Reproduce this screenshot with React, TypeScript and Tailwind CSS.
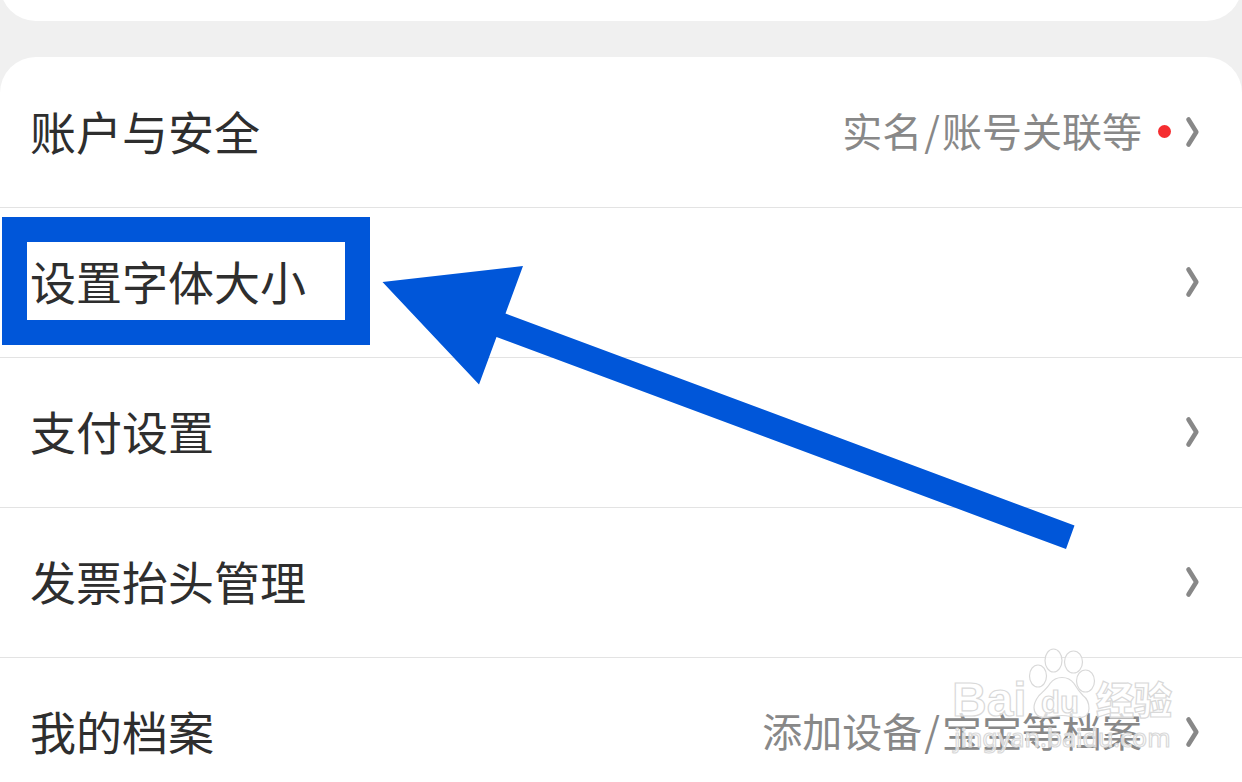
import React from "react";

interface ISettingItem {
  id: string;
  label: string;
  hint?: string[];
  hasBadge?: boolean;
}

const settingList: ISettingItem[] = [
  {
    id: "account",
    label: "账户与安全",
    hint: ["实名", "账号关联等"],
    hasBadge: true,
  },
  { id: "font-size", label: "设置字体大小" },
  { id: "payment", label: "支付设置" },
  { id: "invoice", label: "发票抬头管理" },
  { id: "profile", label: "我的档案", hint: ["添加设备", "宝宝等档案"] },
];

const ChevronIcon = () => (
  <svg
    className="h-8 w-4 shrink-0"
    viewBox="0 0 16 32"
    fill="none"
    stroke="#888888"
    strokeWidth="4.6"
    strokeLinecap="round"
    strokeLinejoin="round"
    aria-hidden="true"
  >
    <path d="M4.5 3.5 12.300 16 4.500 28.500" />
  </svg>
);

const Highlight = () => (
  <div className="pointer-events-none absolute top-[9px] left-0.5 z-10 h-32 w-[368px] border-[25px] border-[#0056d9]" />
);

const PointerArrow = () => (
  <svg
    className="pointer-events-none absolute top-[58px] left-[382px] z-10 h-[284px] w-[693px]"
    viewBox="382 266 693 284"
    fill="#0056d9"
    aria-hidden="true"
  >
    <path d="M382.500 282 523 266 505.500 313.500 1074.500 525.500 1066 549 496.500 337 479 384.500Z" />
  </svg>
);

const Watermark = () => (
  <svg
    className="pointer-events-none absolute -top-3 right-16 z-10 h-28 w-[228px]"
    viewBox="950 646 228 112"
    fill="#ffffff"
    fillOpacity="0.7"
    stroke="#d9d9d9"
    strokeWidth="1.200"
  >
    <text
      x="952"
      y="716"
      fontSize="48"
      fontWeight="700"
      fontFamily="'Liberation Sans', sans-serif"
    >
      Bai
    </text>
    <ellipse cx="1038" cy="676" rx="8.500" ry="11" />
    <ellipse cx="1053.500" cy="660.500" rx="8.500" ry="11.500" />
    <ellipse cx="1073.500" cy="662" rx="9" ry="11" />
    <ellipse cx="1085.500" cy="681" rx="9" ry="11" />
    <path d="M1062 677.500c-6 0-9 2-12 6-3 5-7 8-11 12-3 4-5 8-5 12 0 6 4 10 10 10 7 0 11-2 18-2s11 2 18 2c6 0 9-4 9-9 0-6-2-10-6-13-4-4-6-7-9-12-3-4-6-6-12-6Z" />
    <text
      x="1041"
      y="713"
      fontSize="31"
      fontWeight="700"
      fontFamily="'Liberation Sans', sans-serif"
    >
      du
    </text>
    <text
      x="1096"
      y="714"
      fontSize="38"
      fontWeight="900"
      fontFamily="'Noto Sans CJK SC', sans-serif"
    >
      经验
    </text>
    <text x="954" y="747" fontSize="25" fontFamily="'Noto Sans', sans-serif">
      jingyan.baidu.com
    </text>
  </svg>
);

const SettingRow = ({ item }: { item: ISettingItem }) => {
  return (
    <li className="relative border-b border-[#e3e3e3] last:border-b-0">
      <button
        type="button"
        className="flex h-[149px] w-full items-center justify-between pr-[42px] pb-0.5 pl-[30px]"
      >
        <span className="pb-1 text-[46px] leading-none text-[#2e2e2e]">
          {item.label}
        </span>
        <span className="flex items-center">
          {item.hint && (
            <span className="pb-1 text-[40px] leading-none text-[#888888]">
              {item.hint[0]}
              <span className="mx-0.5">/</span>
              {item.hint[1]}
            </span>
          )}
          {item.hasBadge && (
            <span className="ml-4 h-[13px] w-[13px] rounded-full bg-[#f52d30]" />
          )}
          <span className={item.hasBadge ? "ml-[13px]" : "ml-[42px]"}>
            <ChevronIcon />
          </span>
        </span>
      </button>
      {item.id === "font-size" && (
        <>
          <Highlight />
          <PointerArrow />
        </>
      )}
      {item.id === "profile" && <Watermark />}
    </li>
  );
};

const App = () => {
  return (
    <main className="h-screen overflow-hidden bg-[#f0f0f0] font-['Noto_Sans_CJK_SC',sans-serif]">
      <div className="-mt-[43px] mb-9 h-16 rounded-b-[36px] bg-white" />
      <ul className="rounded-t-[36px] bg-white pt-px">
        {settingList.map((item) => (
          <SettingRow key={item.id} item={item} />
        ))}
      </ul>
    </main>
  );
};

export default App;
